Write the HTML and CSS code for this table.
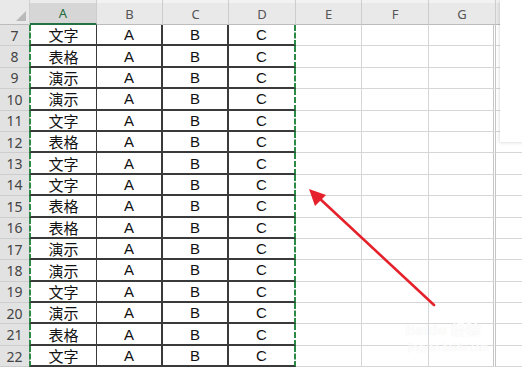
FILE: index.html
```html
<!DOCTYPE html>
<html>
<head>
<meta charset="utf-8">
<link rel="stylesheet" href="styles.css">
</head>
<body>
<div class="sheet">
  <div class="grid" id="grid">
    <div class="corner"><svg class="tri" width="10" height="10" viewBox="0 0 10 10"><polygon points="0,10 10,10 10,0" fill="#b9b9b9"/></svg></div>
    <div class="ch sel">A</div>
    <div class="ch">B</div>
    <div class="ch">C</div>
    <div class="ch">D</div>
    <div class="ch">E</div>
    <div class="ch">F</div>
    <div class="ch">G</div>
    <div class="ch last"></div>
  </div>
  <div class="pane"></div>
  <svg class="arrow" width="522" height="368" viewBox="0 0 522 368">
    <line x1="434" y1="305" x2="318" y2="197" stroke="#e5222c" stroke-width="2.6" stroke-linecap="round"/>
    <polygon points="309,189 326,195 315,206" fill="#e5222c"/>
  </svg>
  <div class="watermark">Baidu 经验<br><span>jingyan.baidu.com</span></div>
</div>
<script src="script.js"></script>
</body>
</html>
```
FILE: script.js
```js
const rows = [
  [7,'文字'],[8,'表格'],[9,'演示'],[10,'演示'],[11,'文字'],[12,'表格'],[13,'文字'],[14,'文字'],
  [15,'表格'],[16,'表格'],[17,'演示'],[18,'演示'],[19,'文字'],[20,'演示'],[21,'表格'],[22,'文字']
];
const g = document.getElementById('grid');
for (const [n, t] of rows) {
  const cells = [
    ['rh', n], ['c a', t], ['c b', 'A'], ['c b', 'B'], ['c d', 'C'],
    ['c e', ''], ['c e', ''], ['c e g', ''], ['c e x', '']
  ];
  for (const [cls, txt] of cells) {
    const d = document.createElement('div');
    d.className = cls;
    d.textContent = txt;
    g.appendChild(d);
  }
}
```
FILE: styles.css
```css
html, body {
  margin: 0;
  padding: 0;
  background: #fff;
  overflow: hidden;
}
.sheet {
  position: relative;
  width: 522px;
  height: 368px;
  overflow: hidden;
  background: #fff;
}
.grid {
  display: grid;
  grid-template-columns: 30px 67px 66px 66px 67px 66px 67px 67px 26px;
  grid-template-rows: 25px repeat(16, 21.4px);
  font-family: "Liberation Sans", "Noto Sans CJK SC", sans-serif;
}
.corner {
  background: #e9e9e9;
  border-right: 1px solid #cfcfcf;
  border-bottom: 1px solid #bcbcbc;
  box-sizing: border-box;
  display: flex;
  align-items: flex-end;
  justify-content: flex-end;
  padding: 0 3px 3px 0;
}
.ch {
  background: #e9e9e9;
  border-right: 1px solid #cdcdcd;
  border-bottom: 1px solid #bcbcbc;
  box-sizing: border-box;
  display: flex;
  align-items: center;
  justify-content: center;
  font-family: "Noto Sans", sans-serif;
  font-size: 13px;
  color: #555;
  padding-top: 3px;
  box-shadow: inset 0 3px 0 #f2f2f2;
}
.ch.sel {
  background: #d6d6d6;
  color: #1f6b3a;
  border-bottom: 2px solid #217346;
  box-shadow: inset 0 3px 0 #ececec;
}
.ch.last {
  border-right: none;
}
.rh {
  background: #e2e2e2;
  border-right: 1px solid #bdbdbd;
  border-bottom: 1px solid #cdcdcd;
  box-sizing: border-box;
  display: flex;
  align-items: center;
  justify-content: center;
  font-family: "Noto Sans", sans-serif;
  font-size: 14px;
  color: #444;
}
.c {
  box-sizing: border-box;
  display: flex;
  align-items: center;
  justify-content: center;
  font-size: 15px;
  color: #111;
}
.c.a {
  border-left: 2px dashed #2c8a47;
  border-right: 1px solid #3a3a3a;
  border-bottom: 2px solid #3a3a3a;
  margin-left: -1px;
  font-family: "Noto Sans CJK SC", sans-serif;
  font-size: 15px;
}
.c.b {
  border-right: 2px solid #3a3a3a;
  border-bottom: 2px solid #3a3a3a;
}
.c.d {
  border-right: 2px dashed #2c8a47;
  border-bottom: 2px solid #3a3a3a;
}
.c.e {
  border-right: 1px solid #d6d6d6;
  border-bottom: 1px solid #d6d6d6;
}
.c.g {
  border-right: 3px double #c6c6c6;
}
.c.x {
  border-right: none;
}
.pane {
  position: absolute;
  left: 500px;
  top: 0;
  width: 30px;
  height: 142px;
  background: #fff;
  box-shadow: -1px 1px 3px rgba(0,0,0,0.12);
}
.arrow {
  position: absolute;
  left: 0;
  top: 0;
  pointer-events: none;
}
.watermark {
  position: absolute;
  left: 405px;
  top: 322px;
  font-family: "Liberation Sans", "Noto Sans CJK SC", sans-serif;
  font-size: 15px;
  line-height: 16px;
  color: rgba(255,255,255,0.9);
  text-shadow: 0 0 1px rgba(0,0,0,0.08);
  font-weight: bold;
}
.watermark span {
  font-size: 10px;
  font-weight: normal;
  padding-left: 3px;
}
```
